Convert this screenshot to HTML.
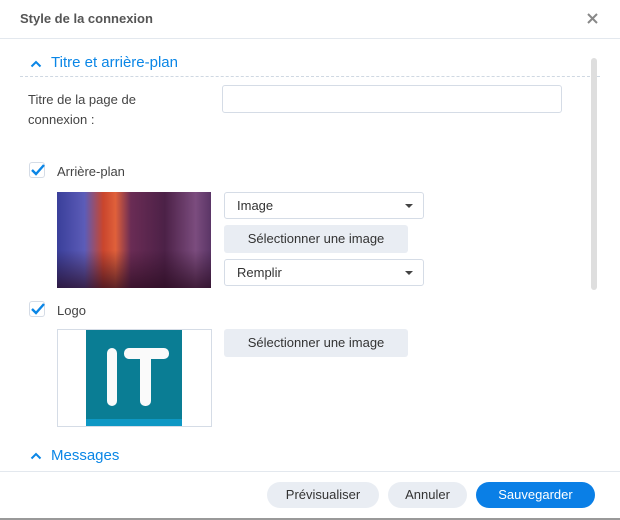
<!DOCTYPE html>
<html><head><meta charset="utf-8"><style>
body{margin:0;width:620px;height:520px;background:#fff;font-family:"Liberation Sans",sans-serif;position:relative;overflow:hidden;color:#444}
.a{position:absolute}
.t{font-size:13px;color:#444}
.inp{position:absolute;border:1px solid #d5dce6;border-radius:3px;background:#fff;box-sizing:border-box}
.sel{position:absolute;border:1px solid #d5dce6;border-radius:3px;box-sizing:border-box;font-size:13px;color:#333;padding-left:12px;line-height:25px}
.sel:after{content:"";position:absolute;right:10px;top:11px;border-left:4px solid transparent;border-right:4px solid transparent;border-top:4px solid #444}
.btn{position:absolute;background:#e9edf3;border-radius:3px;font-size:13px;color:#333;text-align:center;line-height:28px}
.cb{position:absolute;width:16px;height:16px;border:1px solid #d5dce6;border-radius:3px;box-sizing:border-box}
.fb{position:absolute;top:482px;height:26px;border-radius:13px;background:#e9edf3;font-size:13px;line-height:26px;text-align:center;color:#333}
</style></head><body>
<div class="a" style="left:20px;top:11px;font-size:13px;font-weight:bold;color:#555">Style de la connexion</div>
<svg class="a" style="left:587px;top:13px" width="11" height="11"><path d="M1 1L10 10M10 1L1 10" stroke="#888" stroke-width="2"/></svg>
<div class="a" style="left:0;top:38px;width:620px;height:1px;background:#e3e8ee"></div>

<svg class="a" style="left:30px;top:59px" width="12" height="10"><path d="M1.5 7.5L6 3L10.5 7.5" stroke="#0a86e6" stroke-width="2" fill="none"/></svg>
<div class="a" style="left:51px;top:54px;font-size:15px;color:#0a86e6">Titre et arrière-plan</div>
<div class="a" style="left:20px;top:76px;width:580px;border-top:1px dashed #cfd8e2"></div>
<div class="a" style="left:591px;top:58px;width:6px;height:232px;border-radius:3px;background:#dedede"></div>

<div class="a t" style="left:28px;top:90px;line-height:20px">Titre de la page de<br>connexion :</div>
<div class="inp" style="left:222px;top:85px;width:340px;height:28px"></div>

<div class="cb" style="left:29px;top:162px"></div>
<svg class="a" style="left:29px;top:162px" width="18" height="16"><path d="M3 8L7 12L15 3" stroke="#0a86e6" stroke-width="2.4" fill="none"/></svg>
<div class="a t" style="left:57px;top:164px">Arrière-plan</div>
<div class="a" style="left:57px;top:192px;width:154px;height:96px;background:linear-gradient(90deg,#3a3f9a 0%,#5c5cb8 18%,#c9452d 30%,#e0603a 38%,#6a2c55 48%,#4c2147 70%,#7b4c7e 90%,#5a3566 100%)"></div>
<div class="a" style="left:57px;top:250px;width:154px;height:38px;background:linear-gradient(180deg,rgba(40,10,30,0),rgba(40,10,30,.7))"></div>
<div class="sel" style="left:224px;top:192px;width:200px;height:27px">Image</div>
<div class="btn" style="left:224px;top:225px;width:184px;height:28px">Sélectionner une image</div>
<div class="sel" style="left:224px;top:259px;width:200px;height:27px">Remplir</div>

<div class="cb" style="left:29px;top:301px"></div>
<svg class="a" style="left:29px;top:301px" width="18" height="16"><path d="M3 8L7 12L15 3" stroke="#0a86e6" stroke-width="2.4" fill="none"/></svg>
<div class="a t" style="left:57px;top:303px">Logo</div>
<div class="a" style="left:57px;top:329px;width:153px;height:96px;border:1px solid #d5dce6"></div>
<div class="a" style="left:86px;top:330px;width:96px;height:96px;background:#0a7d94"></div>
<div class="a" style="left:86px;top:419px;width:96px;height:7px;background:#0e98c4"></div>
<div class="a" style="left:107px;top:348px;width:10px;height:58px;border-radius:5px;background:#fafafa"></div>
<div class="a" style="left:124px;top:348px;width:45px;height:11px;border-radius:5px;background:#fafafa"></div>
<div class="a" style="left:140px;top:348px;width:11px;height:58px;border-radius:5px;background:#fafafa"></div>
<div class="btn" style="left:224px;top:329px;width:184px;height:28px">Sélectionner une image</div>

<svg class="a" style="left:30px;top:451px" width="12" height="10"><path d="M1.5 7.5L6 3L10.5 7.5" stroke="#0a86e6" stroke-width="2" fill="none"/></svg>
<div class="a" style="left:51px;top:447px;font-size:15px;color:#0a86e6">Messages</div>
<div class="a" style="left:0;top:471px;width:620px;height:1px;background:#e3e8ee"></div>

<div class="fb" style="left:267px;width:112px">Prévisualiser</div>
<div class="fb" style="left:388px;width:79px">Annuler</div>
<div class="fb" style="left:476px;width:119px;background:#0a7fe6;color:#fff">Sauvegarder</div>
<div class="a" style="left:0;top:518px;width:620px;height:2px;background:#999"></div>
</body></html>
